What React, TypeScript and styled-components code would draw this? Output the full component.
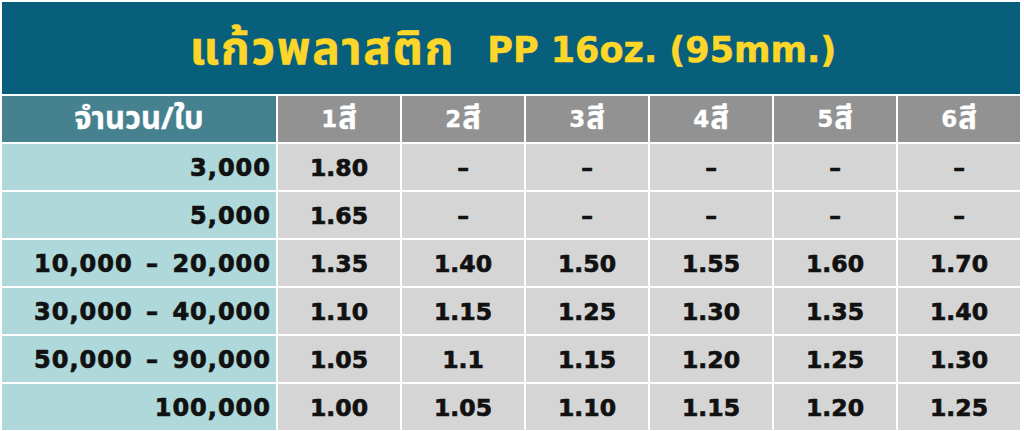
import React from "react";
import styled, { createGlobalStyle } from "styled-components";

const Global = createGlobalStyle`
  html, body { margin: 0; padding: 0; background: #ffffff; }
  body { width: 1024px; height: 431px; overflow: hidden; }
`;

const THAI = `"Noto Sans Thai", "Noto Sans", sans-serif`;
const LATIN = `"DejaVu Sans", "Noto Sans", sans-serif`;

const Page = styled.div`
  padding: 2px 4px 1px 2px;
  display: flex;
  flex-direction: column;
  gap: 2px;
`;

const Title = styled.h1`
  margin: 0;
  height: 92px;
  background: #075f7b;
  display: flex;
  align-items: center;
  justify-content: center;
  gap: 32px;
  color: #fdd62a;
  font-weight: 700;
  padding: 4px 0 0 4px;
  box-sizing: border-box;
  -webkit-text-stroke: 0.5px #fdd62a;
`;

const TitleThai = styled.span`
  font-family: ${THAI};
  font-size: 46px;
  letter-spacing: 1.8px;
`;

const TitleLatin = styled.span`
  font-family: ${LATIN};
  font-size: 35px;
`;

const Grid = styled.div`
  display: grid;
  grid-template-columns: 274px repeat(6, 122px);
  grid-auto-rows: 46px;
  gap: 2px;
`;

const HeadCell = styled.div<{ $first?: boolean }>`
  display: flex;
  align-items: center;
  justify-content: center;
  background: ${(p) => (p.$first ? "#46818f" : "#929292")};
  color: #ffffff;
  font-family: ${THAI};
  font-weight: 700;
  font-size: 31px;
  white-space: nowrap;
  -webkit-text-stroke: 0.3px #ffffff;
`;

const HeadNum = styled.span`
  font-family: ${LATIN};
  font-size: 23px;
  margin-right: 1px;
`;

const QtyCell = styled.div`
  display: flex;
  align-items: center;
  justify-content: flex-end;
  padding: 2px 5px 0 0;
  background: #aed8d9;
  color: #111111;
  font-family: ${LATIN};
  font-weight: 700;
  font-size: 24px;
  letter-spacing: 1px;
  word-spacing: 4px;
  white-space: nowrap;
  -webkit-text-stroke: 0.7px #111111;
`;

const PriceCell = styled.div`
  display: flex;
  align-items: center;
  justify-content: center;
  padding-top: 2px;
  background: #d5d5d5;
  color: #111111;
  font-family: ${LATIN};
  font-weight: 700;
  font-size: 23.5px;
  white-space: nowrap;
  -webkit-text-stroke: 0.7px #111111;
`;

const rows: [string, string[]][] = [
  ["3,000", ["1.80", "–", "–", "–", "–", "–"]],
  ["5,000", ["1.65", "–", "–", "–", "–", "–"]],
  ["10,000 – 20,000", ["1.35", "1.40", "1.50", "1.55", "1.60", "1.70"]],
  ["30,000 – 40,000", ["1.10", "1.15", "1.25", "1.30", "1.35", "1.40"]],
  ["50,000 – 90,000", ["1.05", "1.1", "1.15", "1.20", "1.25", "1.30"]],
  ["100,000", ["1.00", "1.05", "1.10", "1.15", "1.20", "1.25"]],
];

export default function App() {
  return (
    <>
      <Global />
      <Page>
        <Title>
          <TitleThai>แก้วพลาสติก</TitleThai>
          <TitleLatin>PP 16oz. (95mm.)</TitleLatin>
        </Title>
        <Grid>
          <HeadCell $first>จำนวน/ใบ</HeadCell>
          {[1, 2, 3, 4, 5, 6].map((n) => (
            <HeadCell key={n}>
              <HeadNum>{n}</HeadNum>สี
            </HeadCell>
          ))}
          {rows.map(([q, prices]) => (
            <React.Fragment key={q}>
              <QtyCell>{q}</QtyCell>
              {prices.map((v, i) => (
                <PriceCell key={i}>{v}</PriceCell>
              ))}
            </React.Fragment>
          ))}
        </Grid>
      </Page>
    </>
  );
}
